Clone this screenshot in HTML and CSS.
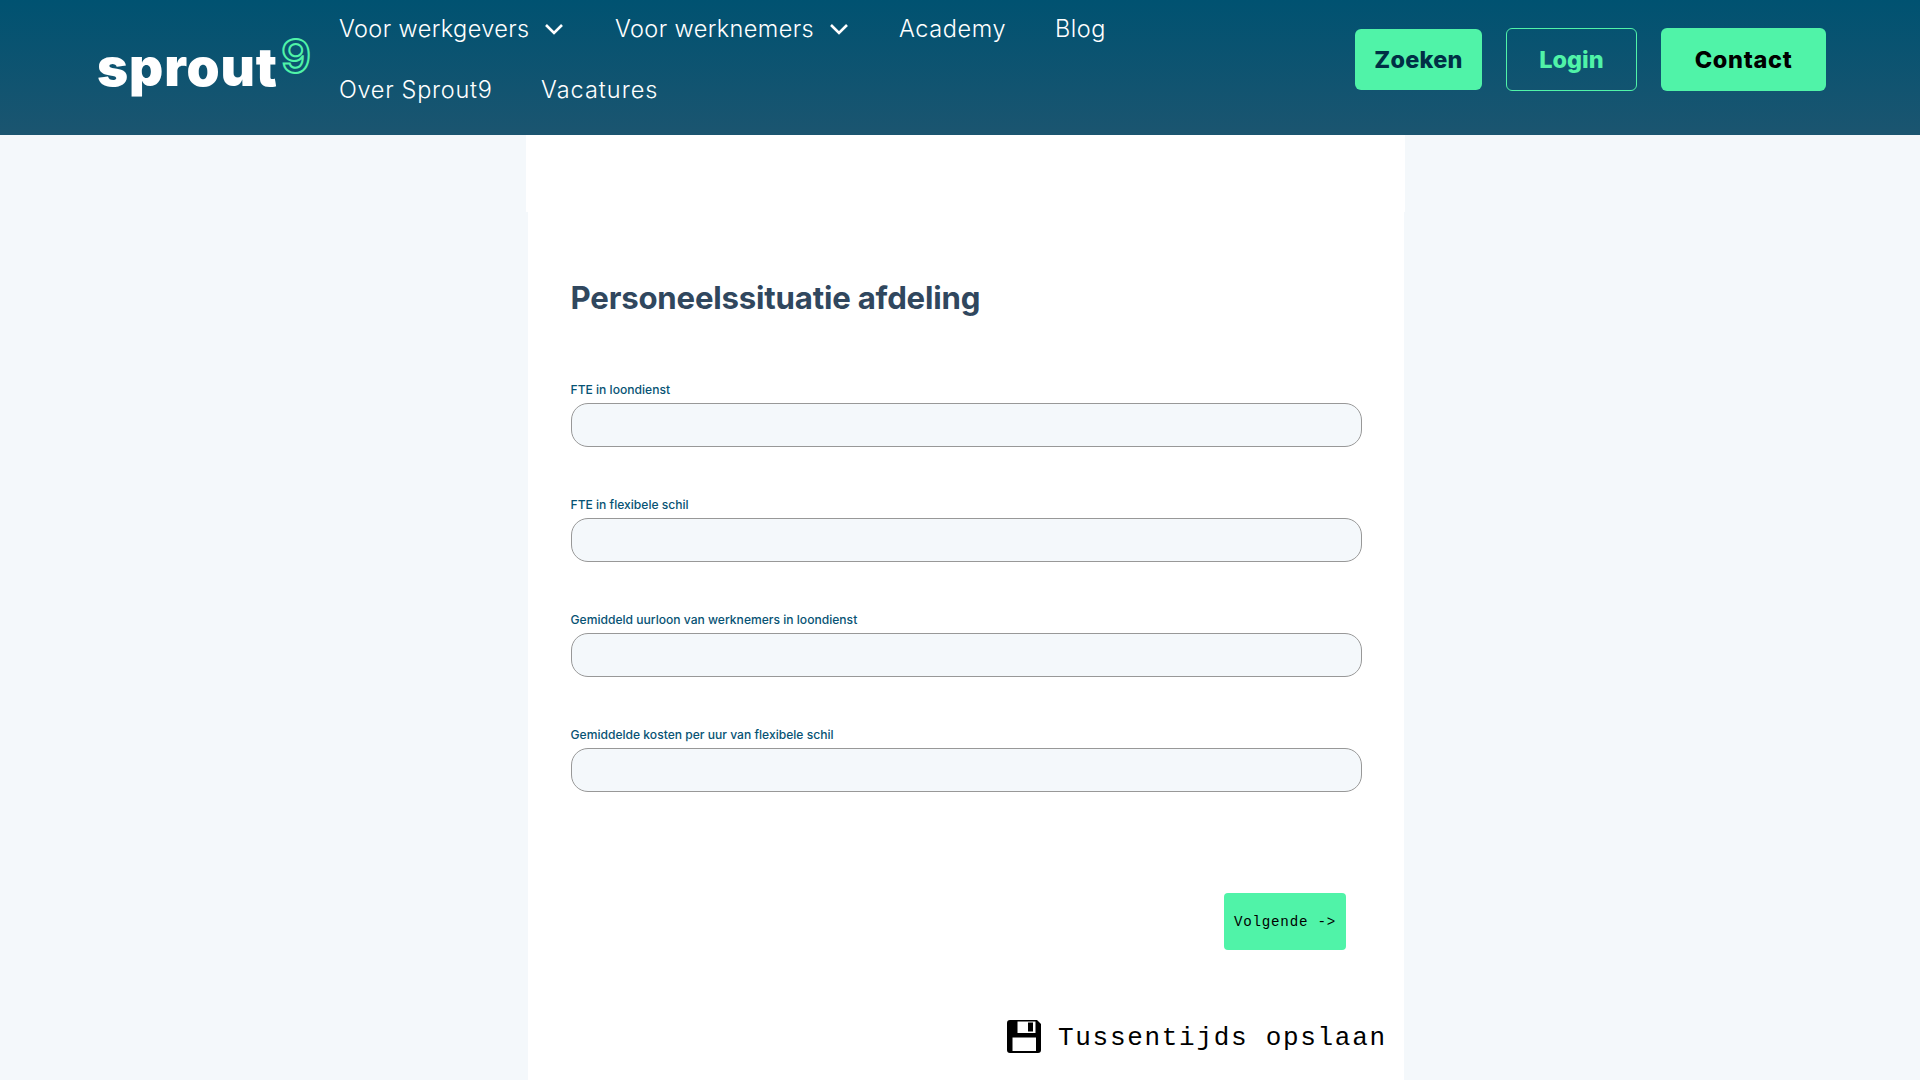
FILE: index.html
```html
<!DOCTYPE html>
<html lang="nl">
<head>
<meta charset="utf-8">
<title>Personeelssituatie afdeling</title>
<link rel="stylesheet" href="styles.css">
</head>
<body>
<header class="header">
  <a class="logo"><span class="logo-word">sprout</span><span class="logo-nine">9</span></a>
  <nav class="nav">
    <div class="nav-row">
      <a class="nav-link employers">Voor werkgevers</a>
      <svg class="chevron" viewBox="0 0 18 12"><path d="M1 2l8 8 8-8"/></svg>
      <a class="nav-link employees">Voor werknemers</a>
      <svg class="chevron" viewBox="0 0 18 12"><path d="M1 2l8 8 8-8"/></svg>
      <a class="nav-link academy">Academy</a>
      <a class="nav-link blog">Blog</a>
    </div>
    <div class="nav-row">
      <a class="nav-link about">Over Sprout9</a>
      <a class="nav-link jobs">Vacatures</a>
    </div>
  </nav>
  <div class="actions">
    <a class="btn search">Zoeken</a>
    <a class="btn login">Login</a>
    <a class="btn contact">Contact</a>
  </div>
</header>
<div class="intro"></div>
<main class="panel">
  <h1 class="title">Personeelssituatie afdeling</h1>
  <form class="form">
    <div class="field"><label class="label" for="a">FTE in loondienst</label><input class="input" id="a"></div>
    <div class="field"><label class="label" for="b">FTE in flexibele schil</label><input class="input" id="b"></div>
    <div class="field"><label class="label" for="c">Gemiddeld uurloon van werknemers in loondienst</label><input class="input" id="c"></div>
    <div class="field"><label class="label" for="d">Gemiddelde kosten per uur van flexibele schil</label><input class="input" id="d"></div>
    <button class="next" type="button">Volgende -&gt;</button>
  </form>
  <div class="save">
    <svg class="disk" viewBox="0 0 34 33">
      <path fill="#000" fill-rule="evenodd" d="M3 0H30L34 4V30Q34 33 31 33H3Q0 33 0 30V3Q0 0 3 0ZM10.500 1.500V13H28.500V1.500ZM5.500 17.500V31H29V17.500Z"/>
      <path fill="#000" d="M21 2.500h5v9h-5z"/>
    </svg>
    <span class="save-text">Tussentijds opslaan</span>
  </div>
</main>
</body>
</html>
```
FILE: styles.css
```css
* { box-sizing: border-box; }
body {
  margin: 0;
  height: 1080px;
  overflow: hidden;
  background: #f4f8fb;
  font-family: "Inter", sans-serif;
}
.header {
  display: flex;
  align-items: flex-start;
  height: 135px;
  padding-left: 97px;
  background: linear-gradient(#005271, #1b5570);
}
.logo { display: flex; width: 242px; }
.logo-word {
  width: 184px;
  margin-top: 37px;
  color: #fff;
  font-size: 53px;
  font-weight: 900;
  line-height: 60px;
  letter-spacing: 0.9px;
}
.logo-nine {
  margin-top: 26px;
  color: transparent;
  -webkit-text-stroke: 2px #50f3a8;
  font-size: 47px;
  font-weight: 600;
  line-height: 60px;
}
.nav { display: flex; flex-direction: column; gap: 4px; width: 1016px; }
.nav-row { display: flex; align-items: center; height: 57px; }
.nav-link {
  color: #fff;
  font-size: 23.5px;
  font-weight: 300;
  line-height: 57px;
  white-space: nowrap;
}
.employers { width: 206px; letter-spacing: 0.4px; }
.employees { width: 215px; letter-spacing: 0.4px; }
.academy { width: 156px; letter-spacing: 0.6px; }
.blog { letter-spacing: 0.5px; }
.about { width: 202px; letter-spacing: 0.7px; }
.jobs { letter-spacing: 1px; }
.chevron {
  width: 18px;
  height: 12px;
  margin-right: 52px;
  fill: none;
  stroke: #fff;
  stroke-width: 2.6;
}
.employees + .chevron { margin-right: 51px; }
.actions { display: flex; align-items: center; gap: 24px; margin-top: 28px; }
.btn {
  display: flex;
  align-items: center;
  justify-content: center;
  height: 63px;
  border-radius: 6px;
  background: #50f3a8;
  color: #000;
  font-size: 23.5px;
  font-weight: 800;
}
.search { width: 127px; height: 61px; color: #002f45; letter-spacing: 0.2px; }
.login { width: 131px; border: 1.5px solid #50f3a8; background: none; color: #50f3a8; }
.contact { width: 165px; letter-spacing: 0.7px; }
.intro { width: 879px; height: 77px; margin-left: 526px; background: #fff; }
.panel {
  width: 876px;
  height: 868px;
  margin-left: 528px;
  padding: 66px 42px 0 42.5px;
  background: #fff;
}
.title {
  margin: 0;
  color: #30475e;
  font-size: 31.2px;
  font-weight: 700;
  line-height: 40px;
  letter-spacing: -0.2px;
  white-space: nowrap;
}
.form { display: flex; flex-direction: column; padding-top: 61px; }
.field { height: 115px; }
.label {
  display: block;
  height: 24px;
  color: #075374;
  font-size: 12.1px;
  font-weight: 500;
  line-height: 21px;
}
.input {
  display: block;
  width: 791.5px;
  height: 44px;
  border: 1px solid #989898;
  border-radius: 17px;
  background: #f4f8fb;
}
.next {
  align-self: flex-end;
  width: 122px;
  height: 57px;
  margin: 54px 16px 0 0;
  padding: 0;
  border: 0;
  border-radius: 4px;
  background: #50f3a8;
  color: #000;
  font-family: "Liberation Mono", monospace;
  font-size: 14.2px;
  letter-spacing: 0.75px;
  white-space: nowrap;
}
.save { display: flex; align-items: center; margin: 70px -30px 0 436.5px; }
.disk { width: 34px; height: 33px; margin-right: 17px; }
.save-text {
  padding-top: 4px;
  font-family: "Liberation Mono", monospace;
  font-size: 26px;
  line-height: 29px;
  letter-spacing: 1.7px;
  white-space: nowrap;
}
```
